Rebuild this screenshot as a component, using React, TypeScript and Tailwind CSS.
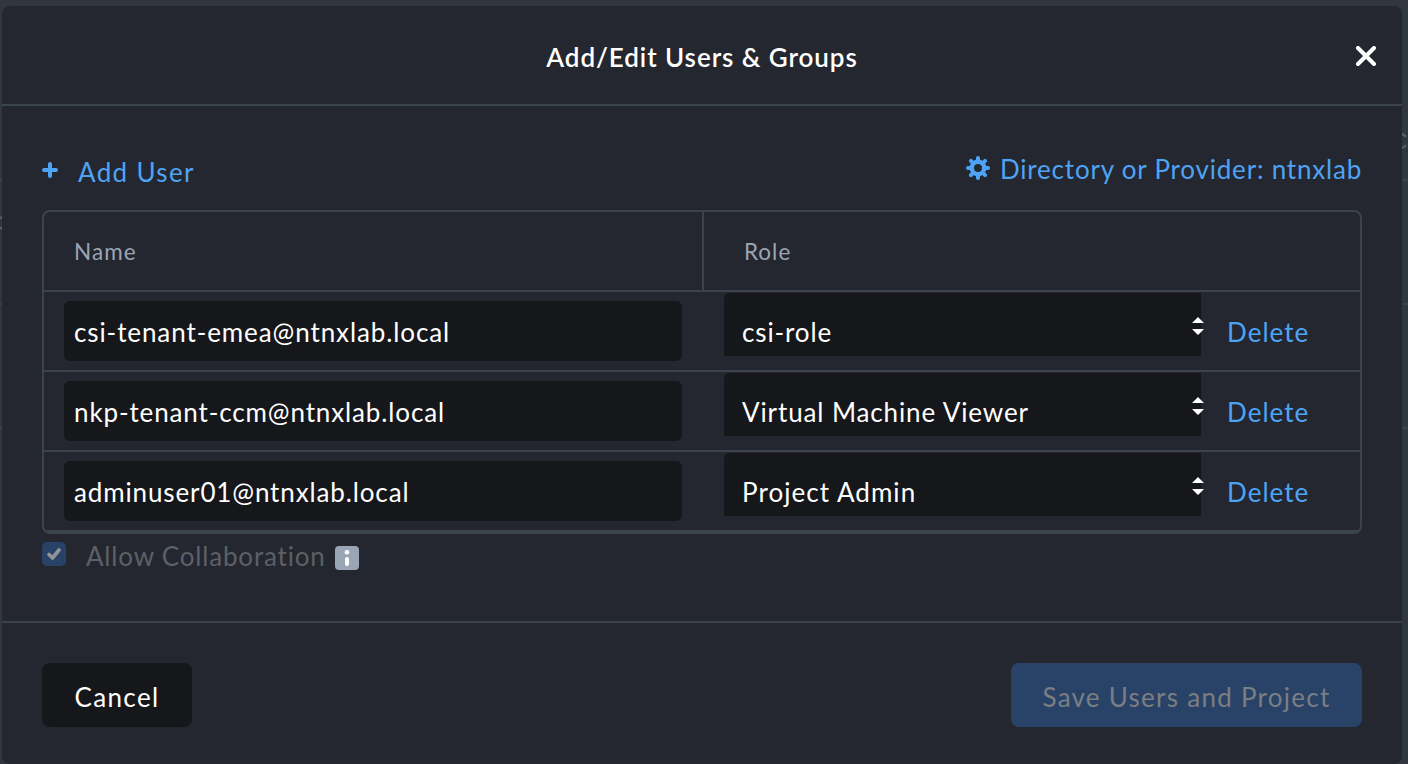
import React from "react";

const users = [
  { name: "csi-tenant-emea@ntnxlab.local", role: "csi-role", nameCls: "tracking-[0.9px]", roleCls: "tracking-[0.87px]" },
  { name: "nkp-tenant-ccm@ntnxlab.local", role: "Virtual Machine Viewer", nameCls: "tracking-[0.87px]", roleCls: "tracking-[0.88px]" },
  { name: "adminuser01@ntnxlab.local", role: "Project Admin", nameCls: "tracking-[0.87px]", roleCls: "tracking-[1.05px]" },
];

function Gear() {
  return (
    <svg width="24" height="24" viewBox="-12 -12 24 24" fill="none" stroke="#4ea3f5">
      <circle r="6.2" strokeWidth="4.4" />
      {[0, 45, 90, 135].map((a) => (
        <g key={a} transform={`rotate(${a})`} strokeWidth="4" strokeLinecap="round">
          <path d="M0 -10V-7M0 7V10" />
        </g>
      ))}
    </svg>
  );
}

function Backdrop() {
  return (
    <svg className="absolute inset-0" width="1408" height="764" viewBox="0 0 1408 764" fill="none">
      <path d="M0 180H1408M0 304H1408M0 428H1408" stroke="#3b434b" strokeWidth="2" />
      <path d="M1401 134Q1404 134 1406 137M1401 148Q1404 148 1406 145M0 219Q1 217 3 217M0 227Q1 229 3 229" stroke="#5a626a" strokeWidth="2" />
    </svg>
  );
}

function Row({ user }: { user: (typeof users)[number] }) {
  return (
    <div className="flex h-20 border-b-2 border-[#3b444c]">
      <div className="ml-5 mt-[9px] flex h-[60px] w-[618px] items-center rounded-md bg-[#16171a] pl-[10px] text-white">
        <span className={`pt-[2px] ${user.nameCls}`}>{user.name}</span>
      </div>
      <div className="relative ml-[42px] mt-px flex h-[63px] w-[477px] items-center rounded-tl-md bg-[#16171a] pl-[18px] text-white">
        <span className={`pt-[15px] ${user.roleCls}`}>{user.role}</span>
        <svg className="absolute -right-[3px] top-6" width="12" height="18" viewBox="0 0 12 18" fill="#fff">
          <path d="M6 0L12 6H0ZM6 18L12 12H0Z" />
        </svg>
      </div>
      <button className="ml-[26px] pt-[2px] text-[#4ea3f5] tracking-[1.05px]">Delete</button>
    </div>
  );
}

export default function App() {
  return (
    <div className="relative h-[764px] w-[1408px] overflow-hidden bg-[#30373e] pl-[2px] pt-[6px] font-['Lato',sans-serif] text-[26px] leading-8 whitespace-nowrap">
      <Backdrop />
      <div className="relative flex h-[758px] w-[1400px] flex-col rounded-lg bg-[#24272f]">
        <header className="flex h-[100px] items-center justify-center border-b-2 border-[#3b444c]">
          <h1 className="pt-[3px] font-semibold text-white tracking-[0.93px]">Add/Edit Users &amp; Groups</h1>
          <svg className="absolute right-[26px] top-10" width="20" height="20" viewBox="0 0 20 20" stroke="#fff" strokeWidth="4" strokeLinecap="round">
            <path d="M2 2L18 18M18 2L2 18" />
          </svg>
        </header>
        <main className="flex h-[517px] flex-col border-b-2 border-[#3b444c] px-10">
          <div className="flex h-[104px] justify-between text-[#4ea3f5]">
            <button className="flex items-center gap-5 pt-7">
              <svg className="mb-1" width="16" height="16" viewBox="0 0 16 16" stroke="#4ea3f5" strokeWidth="4" strokeLinecap="round">
                <path d="M8 2V14M2 8H14" />
              </svg>
              <span className="tracking-[1.35px]">Add User</span>
            </button>
            <button className="flex items-center gap-[10px] pt-5">
              <Gear />
              <span className="pt-[2px] tracking-[0.8px]">Directory or Provider: ntnxlab</span>
            </button>
          </div>
          <section className="h-[324px] shrink-0 rounded-lg border-2 border-[#3b444c]">
            <div className="flex h-20 border-b-2 border-[#3b444c] text-[22.5px] text-[#9aa5b5]">
              <div className="flex w-[660px] items-center border-r-2 border-[#3b444c] pl-[30px] pt-[2px] tracking-[1.1px]">Name</div>
              <div className="flex items-center pl-10 pt-[2px] tracking-[1px]">Role</div>
            </div>
            {users.map((u) => (
              <Row key={u.name} user={u} />
            ))}
          </section>
          <div className="mt-2 flex text-[#5c6067]">
            <svg width="24" height="24" viewBox="0 0 24 24">
              <rect width="24" height="24" rx="5" fill="#294368" />
              <path d="M7 12.5L10.5 16L17 8" fill="none" stroke="#929499" strokeWidth="3.6" strokeLinecap="round" strokeLinejoin="round" />
            </svg>
            <span className="-mt-[2px] ml-5 tracking-[0.82px]">Allow Collaboration</span>
            <svg className="ml-[9px] mt-1" width="24" height="24" viewBox="0 0 24 24" fill="#fff">
              <rect width="24" height="24" rx="4" fill="#9aa5b5" />
              <circle cx="12" cy="6.3" r="2.3" />
              <rect x="10" y="11" width="4" height="9" rx="2" />
            </svg>
          </div>
        </main>
        <footer className="flex justify-between px-10 pt-10">
          <button className="h-16 w-[150px] rounded-lg bg-[#16171a] pt-1 text-white tracking-[1.4px]">Cancel</button>
          <button className="h-16 w-[351px] rounded-lg bg-[#294368] pt-1 text-[#7b7e82] tracking-[1.27px]">Save Users and Project</button>
        </footer>
      </div>
    </div>
  );
}
